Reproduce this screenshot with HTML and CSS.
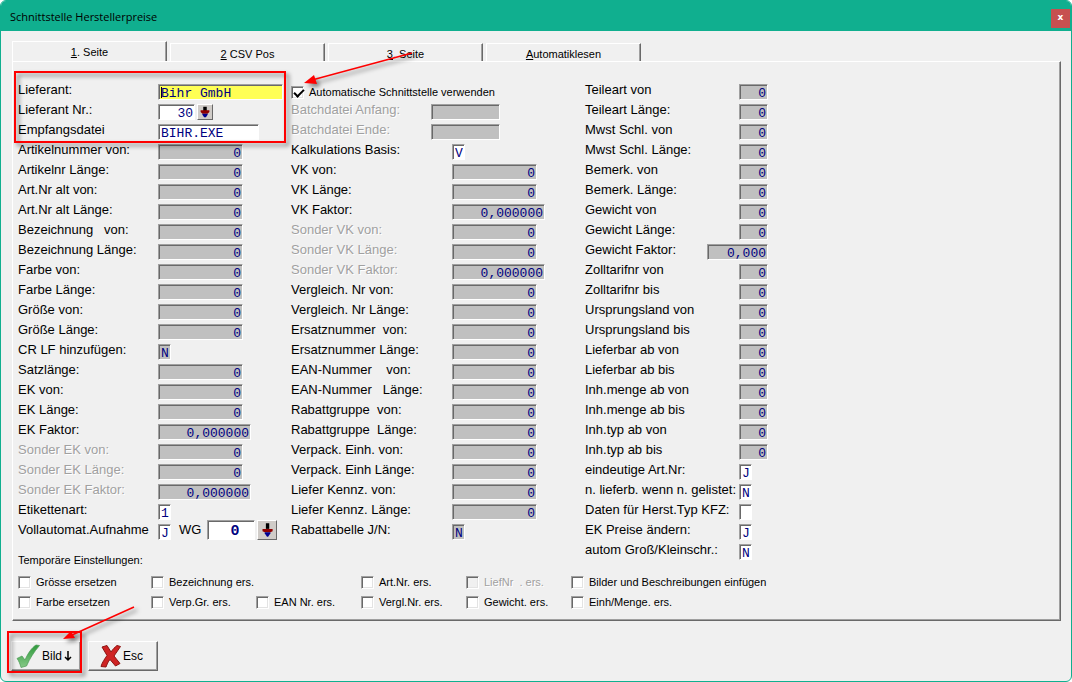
FILE: index.html
```
<!DOCTYPE html>
<html lang="de">
<head>
  <meta charset="UTF-8">
  <meta name="viewport" content="width=device-width, initial-scale=1.0">
  <title>Schnittstelle Herstellerpreise</title>
  <link rel="stylesheet" href="styles.css">
</head>
<body>
  <div class="window">
    <header class="titlebar">
      <h1>Schnittstelle Herstellerpreise</h1>
      <button type="button" class="close">x</button>
    </header>

    <nav class="tabs">
      <button type="button" class="tab active"><span><u>1</u>. Seite</span></button>
      <button type="button" class="tab"><span><u>2</u> CSV Pos</span></button>
      <button type="button" class="tab"><span><u>3</u>. Seite</span></button>
      <button type="button" class="tab"><span><u>A</u>utomatiklesen</span></button>
    </nav>

    <form class="panel">
      <div class="columns">
        <div class="col col-1">
          <label class="row"><span>Lieferant:</span><input class="name focused" value="Bihr GmbH"></label>
          <div class="row"><label for="liefnr">Lieferant Nr.:</label><input id="liefnr" class="nr right" value="30"><button type="button" class="pick" aria-label="Lieferant"><svg viewBox="0 0 16 16"><path d="M6 2h4v5H6z" fill="#000"/><path d="M3 6h10v2l-2 2H5L3 8z" fill="#900000"/><path d="M5 10h6v1l-2 3H7l-2-3z" fill="#000090"/></svg></button></div>
          <label class="row"><span>Empfangsdatei</span><input class="file" value="BIHR.EXE"></label>
          <label class="row"><span>Artikelnummer von:</span><input class="num" value="0" readonly></label>
          <label class="row"><span>Artikelnr Länge:</span><input class="num" value="0" readonly></label>
          <label class="row"><span>Art.Nr alt von:</span><input class="num" value="0" readonly></label>
          <label class="row"><span>Art.Nr alt Länge:</span><input class="num" value="0" readonly></label>
          <label class="row"><span>Bezeichnung   von:</span><input class="num" value="0" readonly></label>
          <label class="row"><span>Bezeichnung Länge:</span><input class="num" value="0" readonly></label>
          <label class="row"><span>Farbe von:</span><input class="num" value="0" readonly></label>
          <label class="row"><span>Farbe Länge:</span><input class="num" value="0" readonly></label>
          <label class="row"><span>Größe von:</span><input class="num" value="0" readonly></label>
          <label class="row"><span>Größe Länge:</span><input class="num" value="0" readonly></label>
          <label class="row"><span>CR LF hinzufügen:</span><input class="char" value="N" readonly></label>
          <label class="row"><span>Satzlänge:</span><input class="num" value="0" readonly></label>
          <label class="row"><span>EK von:</span><input class="num" value="0" readonly></label>
          <label class="row"><span>EK Länge:</span><input class="num" value="0" readonly></label>
          <label class="row"><span>EK Faktor:</span><input class="factor" value="0,000000" readonly></label>
          <label class="row off"><span>Sonder EK von:</span><input class="num" value="0" readonly></label>
          <label class="row off"><span>Sonder EK Länge:</span><input class="num" value="0" readonly></label>
          <label class="row off"><span>Sonder EK Faktor:</span><input class="factor" value="0,000000" readonly></label>
          <label class="row"><span>Etikettenart:</span><input class="char" value="1"></label>
          <div class="row"><label for="vollauto">Vollautomat.Aufnahme</label><input id="vollauto" class="char" value="J"><label for="wg" class="wg-label">WG</label><input id="wg" class="wg" value="0"><button type="button" class="pick big" aria-label="WG"><svg viewBox="0 0 16 16"><path d="M7 2h3v5H7z" fill="#000"/><path d="M4 7h9v2l-2 1H6L4 9z" fill="#900000"/><path d="M6 10h5v1l-2 3H8l-2-3z" fill="#000090"/></svg></button></div>
          <h2>Temporäre Einstellungen:</h2>
        </div>

        <div class="col col-2">
          <label class="check top"><input type="checkbox" checked>Automatische Schnittstelle verwenden</label>
          <label class="row off batch"><span>Batchdatei Anfang:</span><input class="path" value="" readonly></label>
          <label class="row off batch"><span>Batchdatei Ende:</span><input class="path" value="" readonly></label>
          <label class="row"><span>Kalkulations Basis:</span><input class="char" value="V"></label>
          <label class="row"><span>VK von:</span><input class="num" value="0" readonly></label>
          <label class="row"><span>VK Länge:</span><input class="num" value="0" readonly></label>
          <label class="row"><span>VK Faktor:</span><input class="factor" value="0,000000" readonly></label>
          <label class="row off"><span>Sonder VK von:</span><input class="num" value="0" readonly></label>
          <label class="row off"><span>Sonder VK Länge:</span><input class="num" value="0" readonly></label>
          <label class="row off"><span>Sonder VK Faktor:</span><input class="factor" value="0,000000" readonly></label>
          <label class="row"><span>Vergleich. Nr von:</span><input class="num" value="0" readonly></label>
          <label class="row"><span>Vergleich. Nr Länge:</span><input class="num" value="0" readonly></label>
          <label class="row"><span>Ersatznummer  von:</span><input class="num" value="0" readonly></label>
          <label class="row"><span>Ersatznummer Länge:</span><input class="num" value="0" readonly></label>
          <label class="row"><span>EAN-Nummer    von:</span><input class="num" value="0" readonly></label>
          <label class="row"><span>EAN-Nummer   Länge:</span><input class="num" value="0" readonly></label>
          <label class="row"><span>Rabattgruppe  von:</span><input class="num" value="0" readonly></label>
          <label class="row"><span>Rabattgruppe  Länge:</span><input class="num" value="0" readonly></label>
          <label class="row"><span>Verpack. Einh. von:</span><input class="num" value="0" readonly></label>
          <label class="row"><span>Verpack. Einh Länge:</span><input class="num" value="0" readonly></label>
          <label class="row"><span>Liefer Kennz. von:</span><input class="num" value="0" readonly></label>
          <label class="row"><span>Liefer Kennz. Länge:</span><input class="num" value="0" readonly></label>
          <label class="row"><span>Rabattabelle J/N:</span><input class="char" value="N" readonly></label>
        </div>

        <div class="col col-3">
          <label class="row"><span>Teileart von</span><input class="len" value="0" readonly></label>
          <label class="row"><span>Teileart Länge:</span><input class="len" value="0" readonly></label>
          <label class="row"><span>Mwst Schl. von</span><input class="len" value="0" readonly></label>
          <label class="row"><span>Mwst Schl. Länge:</span><input class="len" value="0" readonly></label>
          <label class="row"><span>Bemerk. von</span><input class="len" value="0" readonly></label>
          <label class="row"><span>Bemerk. Länge:</span><input class="len" value="0" readonly></label>
          <label class="row"><span>Gewicht von</span><input class="len" value="0" readonly></label>
          <label class="row"><span>Gewicht Länge:</span><input class="len" value="0" readonly></label>
          <label class="row weight"><span>Gewicht Faktor:</span><input class="short-factor" value="0,000" readonly></label>
          <label class="row"><span>Zolltarifnr von</span><input class="len" value="0" readonly></label>
          <label class="row"><span>Zolltarifnr bis</span><input class="len" value="0" readonly></label>
          <label class="row"><span>Ursprungsland von</span><input class="len" value="0" readonly></label>
          <label class="row"><span>Ursprungsland bis</span><input class="len" value="0" readonly></label>
          <label class="row"><span>Lieferbar ab von</span><input class="len" value="0" readonly></label>
          <label class="row"><span>Lieferbar ab bis</span><input class="len" value="0" readonly></label>
          <label class="row"><span>Inh.menge ab von</span><input class="len" value="0" readonly></label>
          <label class="row"><span>Inh.menge ab bis</span><input class="len" value="0" readonly></label>
          <label class="row"><span>Inh.typ ab von</span><input class="len" value="0" readonly></label>
          <label class="row"><span>Inh.typ ab bis</span><input class="len" value="0" readonly></label>
          <label class="row"><span>eindeutige Art.Nr:</span><input class="char" value="J"></label>
          <label class="row"><span>n. lieferb. wenn n. gelistet:</span><input class="char" value="N"></label>
          <label class="row"><span>Daten für Herst.Typ KFZ:</span><input class="char" value=""></label>
          <label class="row"><span>EK Preise ändern:</span><input class="char" value="J"></label>
          <label class="row"><span>autom Groß/Kleinschr.:</span><input class="char" value="N"></label>
        </div>
      </div>

      <div class="options">
        <label class="check"><input type="checkbox">Grösse ersetzen</label>
        <label class="check wide"><input type="checkbox">Bezeichnung ers.</label>
        <label class="check"><input type="checkbox">Art.Nr. ers.</label>
        <label class="check off"><input type="checkbox" disabled>LiefNr  . ers.</label>
        <label class="check"><input type="checkbox">Bilder und Beschreibungen einfügen</label>
        <label class="check"><input type="checkbox">Farbe ersetzen</label>
        <label class="check"><input type="checkbox">Verp.Gr. ers.</label>
        <label class="check"><input type="checkbox">EAN Nr. ers.</label>
        <label class="check"><input type="checkbox">Vergl.Nr. ers.</label>
        <label class="check"><input type="checkbox">Gewicht. ers.</label>
        <label class="check"><input type="checkbox">Einh/Menge. ers.</label>
      </div>
    </form>

    <footer class="actions">
      <button type="button" class="action">
        <svg class="icon" viewBox="0 0 24 24">
          <defs>
            <linearGradient id="green" x1="0" y1="0" x2="0" y2="1">
              <stop offset="0" stop-color="#2f9a3c"/>
              <stop offset="1" stop-color="#86c987"/>
            </linearGradient>
          </defs>
          <path d="M1 14.500L6 12l3 4C12 9 16 3.500 20 1l3.500 .5C18 8 14 14 10.500 22L5 23.500C4 20 3 17 1 14.500z" fill="url(#green)" stroke="#4b9a54" stroke-width=".7"/>
        </svg>
        Bild
        <svg class="down" viewBox="0 0 8 12"><path d="M4 1v9M1 7l3 3 3-3" fill="none" stroke="#000" stroke-width="1.5"/></svg>
      </button>
      <button type="button" class="action">
        <svg class="icon" viewBox="0 0 24 24">
          <path d="M3 3l5-1.500 4 6.500c2-3 4-5 6-6.500l3.500 1-6.500 9.500 6 7.500-4.500 2.500-5.500-6.500c-2 2-3 5-4 7.500l-5-.5c1-4 4-8 6-11z" fill="#cf2323" stroke="#8c1512" stroke-width="1"/>
        </svg>
        Esc
      </button>
    </footer>

    <!-- red hint frames and arrows -->
    <svg class="hints" width="1072" height="682" viewBox="0 0 1072 682">
      <g fill="none" stroke="#fe0000" stroke-width="2">
        <rect x="15" y="72" width="270" height="70"/>
        <rect x="8" y="632" width="73" height="40"/>
        <path d="M412 53L312 80" stroke-width="1.5"/>
        <path d="M134 607L72 635" stroke-width="1.5"/>
      </g>
      <path d="M304 83l10-8 3 9z" fill="#fe0000"/>
      <path d="M63 639l8-8 4 7z" fill="#fe0000"/>
    </svg>
  </div>

  <script>
    document.querySelectorAll('.tab').forEach(tab => {
      tab.addEventListener('click', () => {
        document.querySelector('.tab.active').classList.remove('active');
        tab.classList.add('active');
      });
    });
  </script>
</body>
</html>
```
FILE: styles.css
```
* {
  box-sizing: border-box;
}

body {
  margin: 0;
  background: #fff;
  font-family: "Liberation Sans", Arial, sans-serif;
  font-size: 13px;
  color: #000;
}

.window {
  position: relative;
  min-height: 100vh;
  background: #f0f0f0;
  border: 1px solid #10af8f;
  border-radius: 6px;
  overflow: hidden;
}

.titlebar {
  display: flex;
  align-items: center;
  justify-content: space-between;
  height: 30px;
  padding: 0 1px 0 9px;
  background: #10af8f;
}

.titlebar h1 {
  margin: 0;
  font: 11px "Open Sans", "Noto Sans", sans-serif;
}

.close {
  width: 19px;
  height: 19px;
  margin-top: 4px;
  padding: 0 0 2px;
  border: none;
  background: #c75050;
  color: #fff;
  font: bold 9px "DejaVu Sans", sans-serif;
}

/* Tabs */
.tabs {
  display: flex;
  align-items: flex-end;
  gap: 3px;
  height: 30px;
  margin: 0 11px;
}

.tab {
  width: 155px;
  height: 18px;
  padding: 2px 0 0;
  border: solid;
  border-width: 1px 1px 0 1px;
  border-color: #fff #696969 #fff #fff;
  box-shadow: inset -1px 0 #a0a0a0;
  background: #f0f0f0;
  font: 11px "Liberation Sans", Arial, sans-serif;
}

.tab.active {
  height: 20px;
  padding: 0;
}

/* Panel */
.panel {
  margin: 0 10px 0 11px;
  padding: 18px 0 8px 5px;
  border: 1px solid;
  border-color: #fff #696969 #696969 #fff;
  box-shadow: inset -1px -1px #a0a0a0;
}

.columns {
  display: grid;
  grid-template-columns: 273px 294px 1fr;
}

.row {
  display: flex;
  align-items: flex-end;
  height: 20px;
  line-height: 20px;
  white-space: pre;
}

.row > :first-child {
  flex: none;
}

.col-1 .row > :first-child {
  width: 140px;
}

.col-2 .row > :first-child {
  width: 161px;
}

.col-2 .batch > :first-child {
  width: 140px;
}

.col-3 .row > :first-child {
  width: 154px;
}

.col-3 .weight > :first-child {
  width: 122px;
}

.off {
  color: #a0a0a0;
  text-shadow: 1px 1px #fff;
}

.row input {
  height: 16px;
  padding: 2px 1px 0 2px;
  border: 1px solid;
  border-color: #a0a0a0 #fff #fff #a0a0a0;
  border-radius: 0;
  box-shadow: inset 1px 1px #696969;
  background: #fff;
  color: #000080;
  font: 13px "Liberation Mono", "Courier New", monospace;
  text-shadow: none;
  outline: none;
}

.row input:read-only {
  background: #c0c0c0;
}

.row .focused {
  background: #ffff54 linear-gradient(#000, #000) 2px 2px / 1px 11px no-repeat;
}

.name { width: 125px; }
.nr { width: 37px; }
.file { width: 101px; }
.num { width: 85px; }
.factor { width: 93px; }
.path { width: 69px; }
.len { width: 29px; }
.short-factor { width: 61px; }
.char { width: 13px; }

.right,
.num,
.factor,
.len,
.short-factor {
  text-align: right;
}

.wg-label {
  margin: 0 6px 0 8px;
}

.row .wg {
  width: 48px;
  height: 20px;
  padding-right: 15px;
  font-size: 15px;
  font-weight: bold;
  text-align: right;
}

.pick {
  width: 16px;
  height: 16px;
  margin-left: 2px;
  padding: 0;
  border: 1px solid;
  border-color: #fff #696969 #696969 #fff;
  background: #d0ccc8;
}

.pick.big {
  width: 20px;
  height: 20px;
}

.pick svg {
  display: block;
  width: 100%;
  height: 100%;
}

h2 {
  margin: 10px 0 0;
  font-size: 11px;
  font-weight: normal;
  line-height: 20px;
}

/* Check boxes */
.check {
  display: flex;
  align-items: center;
  gap: 5px;
  height: 20px;
  font-size: 11px;
  white-space: pre;
}

.check.top {
  padding-top: 4px;
}

.check input {
  appearance: none;
  width: 13px;
  height: 13px;
  margin: 0;
  border: 1px solid;
  border-color: #a0a0a0 #fff #fff #a0a0a0;
  box-shadow: inset 1px 1px #696969, inset -1px -1px #e3e3e3;
  background: #fff;
}

.check input:disabled {
  background: #f0f0f0;
}

.check input:checked::before {
  content: "";
  display: block;
  width: 8px;
  height: 4px;
  margin: 2px 0 0 2px;
  border: solid #000;
  border-width: 0 0 2px 2px;
  transform: rotate(-45deg);
}

.options {
  display: grid;
  grid-template-columns: 133px repeat(4, 105px) 1fr;
  padding-top: 2px;
}

.options .wide {
  grid-column: span 2;
}

/* Bottom buttons */
.actions {
  display: flex;
  gap: 7px;
  padding: 20px 10px 10px;
}

.action {
  display: flex;
  align-items: center;
  gap: 2px;
  width: 70px;
  height: 30px;
  padding: 0 0 0 4px;
  border: 1px solid;
  border-color: #fff #696969 #696969 #fff;
  box-shadow: inset -1px -1px #a0a0a0;
  background: #f0f0f0;
  font: 12px "Liberation Sans", Arial, sans-serif;
}

.action + .action {
  padding-left: 10px;
  gap: 0;
}

.icon {
  width: 24px;
  height: 24px;
}

.down {
  width: 8px;
  height: 12px;
}

.hints {
  position: absolute;
  top: -1px;
  left: -1px;
  pointer-events: none;
  filter: drop-shadow(3px 3px 2px rgba(0, 0, 0, 0.5));
}
```
